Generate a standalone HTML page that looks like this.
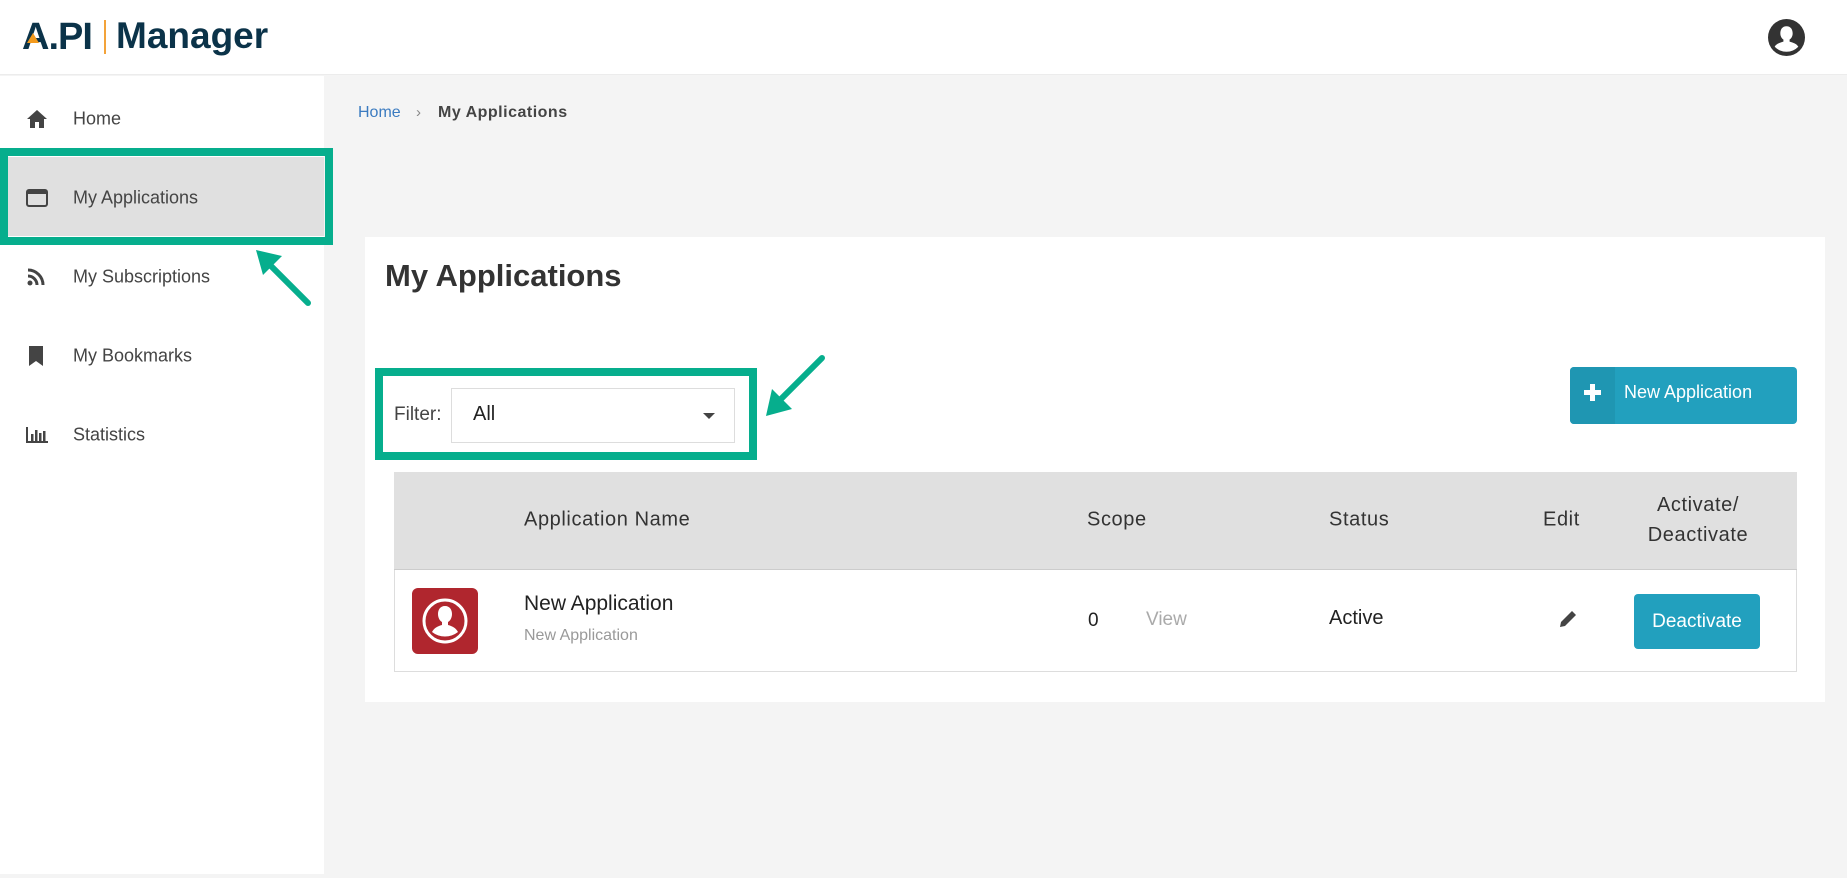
<!DOCTYPE html>
<html><head><meta charset="utf-8"><style>
*{box-sizing:border-box;margin:0;padding:0}
body{width:1847px;height:878px;overflow:hidden;background:#f4f4f4;font-family:"Liberation Sans",sans-serif;position:relative;color:#333}
.abs{position:absolute}
.hdr{left:0;top:0;width:1847px;height:75px;background:#fff;border-bottom:1px solid #ececec}
.side{left:0;top:76px;width:324px;height:798px;background:#fff}
.mi{position:absolute;left:73px;font-size:18px;color:#444;transform:translateY(-50%)}
.ic{position:absolute;left:26px;transform:translateY(-50%)}
.card{left:365px;top:237px;width:1460px;height:465px;background:#fff}
.th{position:absolute;font-size:20px;color:#333;letter-spacing:.6px;transform:translateY(-50%)}
</style></head><body>
<div class="abs hdr"></div>
<div class="abs" style="left:22px;top:16px;font-size:38px;font-weight:bold;color:#0b3349;letter-spacing:-1px">A.PI</div>
<div class="abs" style="left:27px;top:33px;width:0;height:0;border-left:6px solid transparent;border-right:6px solid transparent;border-bottom:10px solid #f39a1d"></div>
<div class="abs" style="left:104px;top:20px;width:2px;height:34px;background:#f3a33a"></div>
<div class="abs" style="left:116px;top:15px;font-size:37px;font-weight:bold;color:#0b3349">Manager</div>
<svg class="abs" style="left:1768px;top:19px" width="37" height="37" viewBox="0 0 36 36"><circle cx="18" cy="18" r="18" fill="#333"/><path d="M18 7c-4 0-6 3-6 7 0 3 1.5 5 3 6v2c-3 1-7 2-8.5 5A16 16 0 0 0 29.5 27C28 24 24 23 21 22v-2c1.5-1 3-3 3-6 0-4-2-7-6-7z" fill="#fff"/></svg>

<div class="abs side"></div>
<div class="abs" style="left:0;top:157px;width:324px;height:79px;background:#e0e0e0"></div>
<div class="abs" style="left:0;top:148px;width:333px;height:97px;border:8px solid #06ae8d"></div>
<svg class="ic" style="top:119px" width="22" height="20" viewBox="0 0 22 20"><path d="M11 1L1 10h3v9h5v-6h4v6h5v-9h3z" fill="#444"/></svg>
<div class="mi" style="top:119px">Home</div>
<svg class="ic" style="top:198px" width="22" height="18" viewBox="0 0 22 18"><rect x="1" y="1" width="20" height="16" rx="2" fill="none" stroke="#444" stroke-width="2"/><rect x="1" y="1" width="20" height="4" fill="#444"/></svg>
<div class="mi" style="top:198px">My Applications</div>
<svg class="ic" style="top:277px" width="20" height="20" viewBox="0 0 20 20"><circle cx="4" cy="16" r="2.5" fill="#444"/><path d="M2 9a9 9 0 0 1 9 9M2 3a15 15 0 0 1 15 15" stroke="#444" stroke-width="3" fill="none"/></svg>
<div class="mi" style="top:277px">My Subscriptions</div>
<svg class="ic" style="top:356px;left:29px" width="14" height="20" viewBox="0 0 14 20"><path d="M0 0h14v20l-7-5-7 5z" fill="#444"/></svg>
<div class="mi" style="top:356px">My Bookmarks</div>
<svg class="ic" style="top:435px" width="22" height="16" viewBox="0 0 22 16"><path d="M1 0v15h21" stroke="#444" stroke-width="2" fill="none"/><rect x="5" y="7" width="2.5" height="7" fill="#444"/><rect x="9" y="3" width="2.5" height="11" fill="#444"/><rect x="13" y="6" width="2.5" height="8" fill="#444"/><rect x="17" y="4" width="2.5" height="10" fill="#444"/></svg>
<div class="mi" style="top:435px">Statistics</div>
<svg class="abs" style="left:250px;top:243px" width="66" height="66"><path d="M58 60L14 16" stroke="#06ae8d" stroke-width="6" stroke-linecap="round"/><path d="M6 7l26 6-19 19z" fill="#06ae8d"/></svg>

<div class="abs" style="left:358px;top:104px;font-size:16px;color:#3b7bc0">Home</div>
<div class="abs" style="left:416px;top:104px;font-size:15px;color:#888">›</div>
<div class="abs" style="left:438px;top:104px;font-size:16px;color:#444;font-weight:bold;letter-spacing:.5px">My Applications</div>

<div class="abs card"></div>
<div class="abs" style="left:385px;top:258px;font-size:31px;font-weight:bold;color:#333">My Applications</div>

<div class="abs" style="left:375px;top:368px;width:382px;height:92px;border:8px solid #06ae8d"></div>
<div class="abs" style="left:394px;top:404px;font-size:19px;color:#444">Filter:</div>
<div class="abs" style="left:451px;top:388px;width:284px;height:55px;border:1px solid #ddd;background:#fff"></div>
<div class="abs" style="left:473px;top:403px;font-size:20px;color:#222">All</div>
<div class="abs" style="left:703px;top:413px;border-left:6px solid transparent;border-right:6px solid transparent;border-top:6px solid #444"></div>
<svg class="abs" style="left:758px;top:350px" width="72" height="72"><path d="M64 8L20 52" stroke="#06ae8d" stroke-width="6" stroke-linecap="round"/><path d="M8 66l6-27 20 20z" fill="#06ae8d"/></svg>

<div class="abs" style="left:1570px;top:367px;width:227px;height:57px;background:#22a0be;border-radius:4px;overflow:hidden"><div style="width:45px;height:57px;background:#1f96b2"></div></div>
<div class="abs" style="left:1584px;top:384px;width:17px;height:5px;margin-top:6px;background:#fff"></div>
<div class="abs" style="left:1590px;top:384px;width:5px;height:17px;background:#fff"></div>
<div class="abs" style="left:1624px;top:382px;font-size:18px;color:#fff">New Application</div>

<div class="abs" style="left:394px;top:472px;width:1403px;height:200px;border:1px solid #ddd;background:#fff"></div>
<div class="abs" style="left:394px;top:472px;width:1403px;height:98px;background:#e0e0e0;border-bottom:1px solid #ccc"></div>
<div class="th" style="left:524px;top:520px">Application Name</div>
<div class="th" style="left:1087px;top:520px">Scope</div>
<div class="th" style="left:1329px;top:520px">Status</div>
<div class="th" style="left:1543px;top:520px">Edit</div>
<div class="th" style="left:1634px;width:128px;text-align:center;top:520px;line-height:30px">Activate/<br>Deactivate</div>

<svg class="abs" style="left:412px;top:588px" width="66" height="66" viewBox="0 0 66 66"><rect width="66" height="66" rx="6" fill="#b0262e"/><circle cx="33" cy="33" r="21" fill="none" stroke="#fff" stroke-width="3"/><path d="M33 18c-5 0-7 4-7 8 0 4 2 7 4 8v3c-4 1-8 3-10 7a21 21 0 0 0 26 0c-2-4-6-6-10-7v-3c2-1 4-4 4-8 0-4-2-8-7-8z" fill="#fff"/></svg>
<div class="abs" style="left:524px;top:592px;font-size:21px;color:#222">New Application</div>
<div class="abs" style="left:524px;top:627px;font-size:16px;color:#999">New Application</div>
<div class="abs" style="left:1088px;top:610px;font-size:19px;color:#222">0</div>
<div class="abs" style="left:1146px;top:609px;font-size:19px;color:#aaa">View</div>
<div class="abs" style="left:1329px;top:607px;font-size:20px;color:#222">Active</div>
<svg class="abs" style="left:1558px;top:609px" width="20" height="20" viewBox="0 0 20 20"><path d="M2 18l1-5L14 2l4 4L7 17z" fill="#444"/></svg>
<div class="abs" style="left:1634px;top:594px;width:126px;height:55px;background:#22a0be;border-radius:4px;color:#fff;font-size:19px;text-align:center;line-height:55px">Deactivate</div>
</body></html>
